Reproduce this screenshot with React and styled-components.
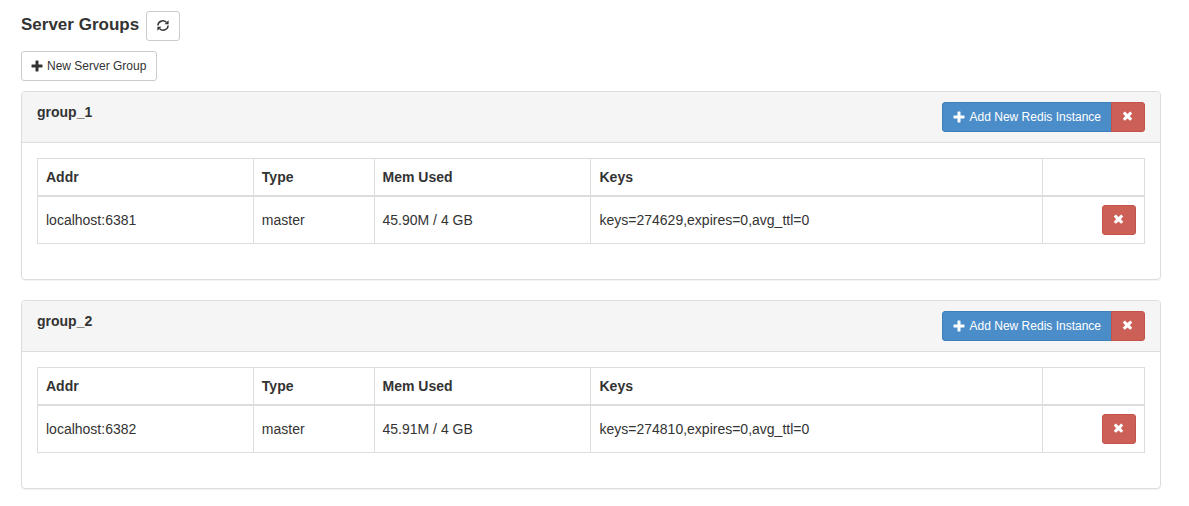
import React from "react";
import styled, { createGlobalStyle, css } from "styled-components";

const GlobalStyle = createGlobalStyle`
  *, *::before, *::after { box-sizing: border-box; }
  body {
    margin: 0;
    background: #fff;
    color: #333;
    font: 14px/20px "Liberation Sans", Arial, sans-serif;
  }
`;

const Page = styled.main`
  padding: 11px 28px 16px 21px;
`;

const TitleBar = styled.header`
  display: flex;
  align-items: center;
  gap: 7px;
  margin-bottom: 10px;
`;

const Title = styled.h1`
  margin: 0 0 2px;
  font-size: 17px;
  line-height: 20px;
  font-weight: 700;
`;

const tones = {
  plain: css`
    background: #fff;
    border-color: #ccc;
    color: #333;
  `,
  primary: css`
    gap: 5px;
    padding-left: 10px;
    background: #4b8dc9;
    border-color: #3c7fbb;
    color: #fff;
  `,
  danger: css`
    background: #cc6057;
    border-color: #c4524a;
    color: #fff;
  `,
};

const Button = styled.button`
  display: inline-flex;
  align-items: center;
  justify-content: center;
  gap: 4px;
  height: 30px;
  min-width: 34px;
  padding: 0 10px 0 9px;
  border: 1px solid;
  border-radius: 3px;
  font: 12px/18px "Liberation Sans", Arial, sans-serif;
  white-space: nowrap;
  cursor: pointer;
  ${({ $tone = "plain" }) => tones[$tone]}
`;

const ButtonGroup = styled.div`
  display: flex;

  ${Button}:first-child {
    border-top-right-radius: 0;
    border-bottom-right-radius: 0;
  }
  ${Button}:last-child {
    margin-left: -1px;
    border-top-left-radius: 0;
    border-bottom-left-radius: 0;
  }
`;

const IconSvg = styled.svg`
  width: 12px;
  height: 12px;
  flex: none;
  fill: currentColor;
`;

const Panel = styled.section`
  margin: 10px 0 20px;
  border: 1px solid #ddd;
  border-radius: 4px;
  box-shadow: 0 1px 1px rgba(0, 0, 0, 0.05);
`;

const PanelHeader = styled.header`
  display: flex;
  justify-content: space-between;
  align-items: flex-start;
  padding: 10px 15px;
  background: #f5f5f5;
  border-bottom: 1px solid #ddd;
  border-radius: 3px 3px 0 0;
`;

const GroupName = styled.h2`
  margin: 0;
  font-size: 14px;
  line-height: 20px;
`;

const PanelBody = styled.div`
  padding: 15px 15px 35px;
`;

const Table = styled.table`
  width: 100%;
  table-layout: fixed;
  border-collapse: separate;
  border-spacing: 0;
  border: solid #ddd;
  border-width: 1px 0 0 1px;
`;

const Column = styled.col`
  width: ${({ $share }) => $share}%;
`;

const HeadCell = styled.th`
  height: 38px;
  padding: 0 8px;
  border: solid #ddd;
  border-width: 0 1px 2px 0;
  text-align: left;
`;

const Cell = styled.td`
  height: 47px;
  padding: 8px;
  border: solid #ddd;
  border-width: 0 1px 1px 0;
  line-height: 20px;
`;

const ActionCell = styled(Cell)`
  text-align: right;

  ${Button} {
    vertical-align: top;
  }
`;

const PlusIcon = () => (
  <IconSvg viewBox="0 0 12 12" aria-hidden="true">
    <path d="M4.9 0.5h2.2q.4 0 .4.4v3.6h3.6q.4 0 .4.4v2.2q0 .4-.4.4H7.5v3.6q0 .4-.4.4H4.9q-.4 0-.4-.4V7.5H.9q-.4 0-.4-.4V4.9q0-.4.4-.4h3.6V.9q0-.4.4-.4z" />
  </IconSvg>
);

const RemoveIcon = () => (
  <IconSvg viewBox="0 0 12 12" aria-hidden="true">
    <path d="M3.1 .7 5.5 3 7.9 .7q.3-.3.6 0l1.5 1.5q.3.3 0 .6L7.8 5.2 10 7.5q.3.3 0 .6L8.5 9.6q-.3.3-.6 0L5.5 7.4 3.1 9.6q-.3.3-.6 0L1 8.1q-.3-.3 0-.6L3.2 5.2 1 2.8q-.3-.3 0-.6L2.5 .7q.3-.3.6 0z" />
  </IconSvg>
);

const RefreshIcon = () => (
  <IconSvg viewBox="0 0 12 12" aria-hidden="true">
    <path
      d="M.9 5.6A5 4.7 0 0 1 9.4 2.2M11.1 5.4A5 4.7 0 0 1 2.6 8.8"
      fill="none"
      stroke="currentColor"
      strokeWidth="1.4"
    />
    <path d="M11.6.2v4.1H7.5zM.4 10.8V6.7h4.1z" />
  </IconSvg>
);

const columns = [
  { label: "Addr", share: 19.5 },
  { label: "Type", share: 10.9 },
  { label: "Mem Used", share: 19.6 },
  { label: "Keys", share: 40.8 },
  { label: "", share: 9.2 },
];

const groups = [
  {
    name: "group_1",
    servers: [
      {
        addr: "localhost:6381",
        type: "master",
        mem: "45.90M / 4 GB",
        keys: "keys=274629,expires=0,avg_ttl=0",
      },
    ],
  },
  {
    name: "group_2",
    servers: [
      {
        addr: "localhost:6382",
        type: "master",
        mem: "45.91M / 4 GB",
        keys: "keys=274810,expires=0,avg_ttl=0",
      },
    ],
  },
];

function ServerGroup({ name, servers }) {
  return (
    <Panel>
      <PanelHeader>
        <GroupName>{name}</GroupName>
        <ButtonGroup>
          <Button type="button" $tone="primary">
            <PlusIcon />
            Add New Redis Instance
          </Button>
          <Button type="button" $tone="danger" aria-label={`Remove ${name}`}>
            <RemoveIcon />
          </Button>
        </ButtonGroup>
      </PanelHeader>
      <PanelBody>
        <Table>
          <colgroup>
            {columns.map((c) => (
              <Column key={c.label} $share={c.share} />
            ))}
          </colgroup>
          <thead>
            <tr>
              {columns.map((c) => (
                <HeadCell key={c.label} scope="col">
                  {c.label}
                </HeadCell>
              ))}
            </tr>
          </thead>
          <tbody>
            {servers.map((s) => (
              <tr key={s.addr}>
                <Cell>{s.addr}</Cell>
                <Cell>{s.type}</Cell>
                <Cell>{s.mem}</Cell>
                <Cell>{s.keys}</Cell>
                <ActionCell>
                  <Button type="button" $tone="danger" aria-label={`Remove ${s.addr}`}>
                    <RemoveIcon />
                  </Button>
                </ActionCell>
              </tr>
            ))}
          </tbody>
        </Table>
      </PanelBody>
    </Panel>
  );
}

export default function App() {
  return (
    <>
      <GlobalStyle />
      <Page>
        <TitleBar>
          <Title>Server Groups</Title>
          <Button type="button" aria-label="Refresh">
            <RefreshIcon />
          </Button>
        </TitleBar>
        <Button type="button">
          <PlusIcon />
          New Server Group
        </Button>
        {groups.map((g) => (
          <ServerGroup key={g.name} {...g} />
        ))}
      </Page>
    </>
  );
}
